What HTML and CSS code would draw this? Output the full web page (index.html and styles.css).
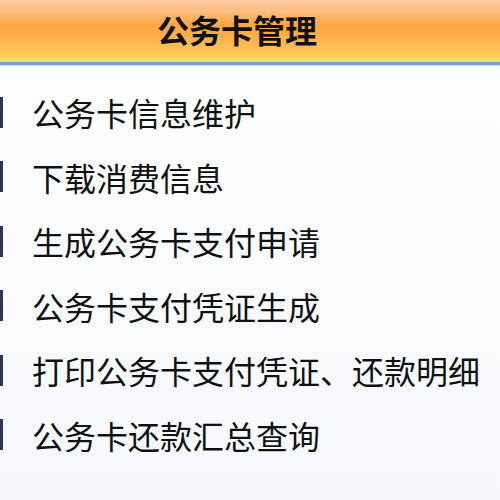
FILE: index.html
```html
<!DOCTYPE html>
<html lang="zh-CN">
<head>
<meta charset="utf-8">
<link rel="stylesheet" href="styles.css">
</head>
<body>
<div class="header"><span class="title">公务卡管理</span></div>
<div class="rule"></div>
<ul class="menu">
  <li class="item"><span class="bar"></span><span class="label">公务卡信息维护</span></li>
  <li class="item"><span class="bar"></span><span class="label">下载消费信息</span></li>
  <li class="item"><span class="bar"></span><span class="label">生成公务卡支付申请</span></li>
  <li class="item"><span class="bar"></span><span class="label">公务卡支付凭证生成</span></li>
  <li class="item"><span class="bar"></span><span class="label">打印公务卡支付凭证、还款明细</span></li>
  <li class="item"><span class="bar"></span><span class="label">公务卡还款汇总查询</span></li>
</ul>
</body>
</html>
```
FILE: styles.css
```css
html, body {
  margin: 0;
  padding: 0;
  min-height: 500px;
  background: linear-gradient(to bottom, #ffffff 0px, #fcfdfe 100px, #f5f8fd 500px);
  font-family: "Noto Sans CJK SC", "Noto Sans", sans-serif;
  color: #111;
}
.header {
  height: 62px;
  background: linear-gradient(to bottom, #fdcca3 0px, #fdbb80 12px, #fca641 25px, #fdb34c 40px, #fdc85a 52px, #fed668 59px, #efdc8c 62px);
  display: flex;
  align-items: center;
  justify-content: center;
  padding-right: 26px;
  border-bottom: 3px solid #7e9ed8;
}
.title {
  font-size: 32px;
  font-weight: bold;
  line-height: 32px;
  margin-top: -4px;
}
.rule {
  height: 1px;
  background: #c9d6f0;
}
.menu {
  list-style: none;
  margin: 0;
  padding: 30px 0 0 0;
}
.item {
  display: flex;
  align-items: center;
  gap: 29px;
  height: 32px;
  margin-bottom: 32.6px;
}
.bar {
  width: 3px;
  height: 31px;
  background: #2c3652;
  flex: none;
}
.label {
  font-size: 32px;
  line-height: 32px;
  white-space: nowrap;
}
```
